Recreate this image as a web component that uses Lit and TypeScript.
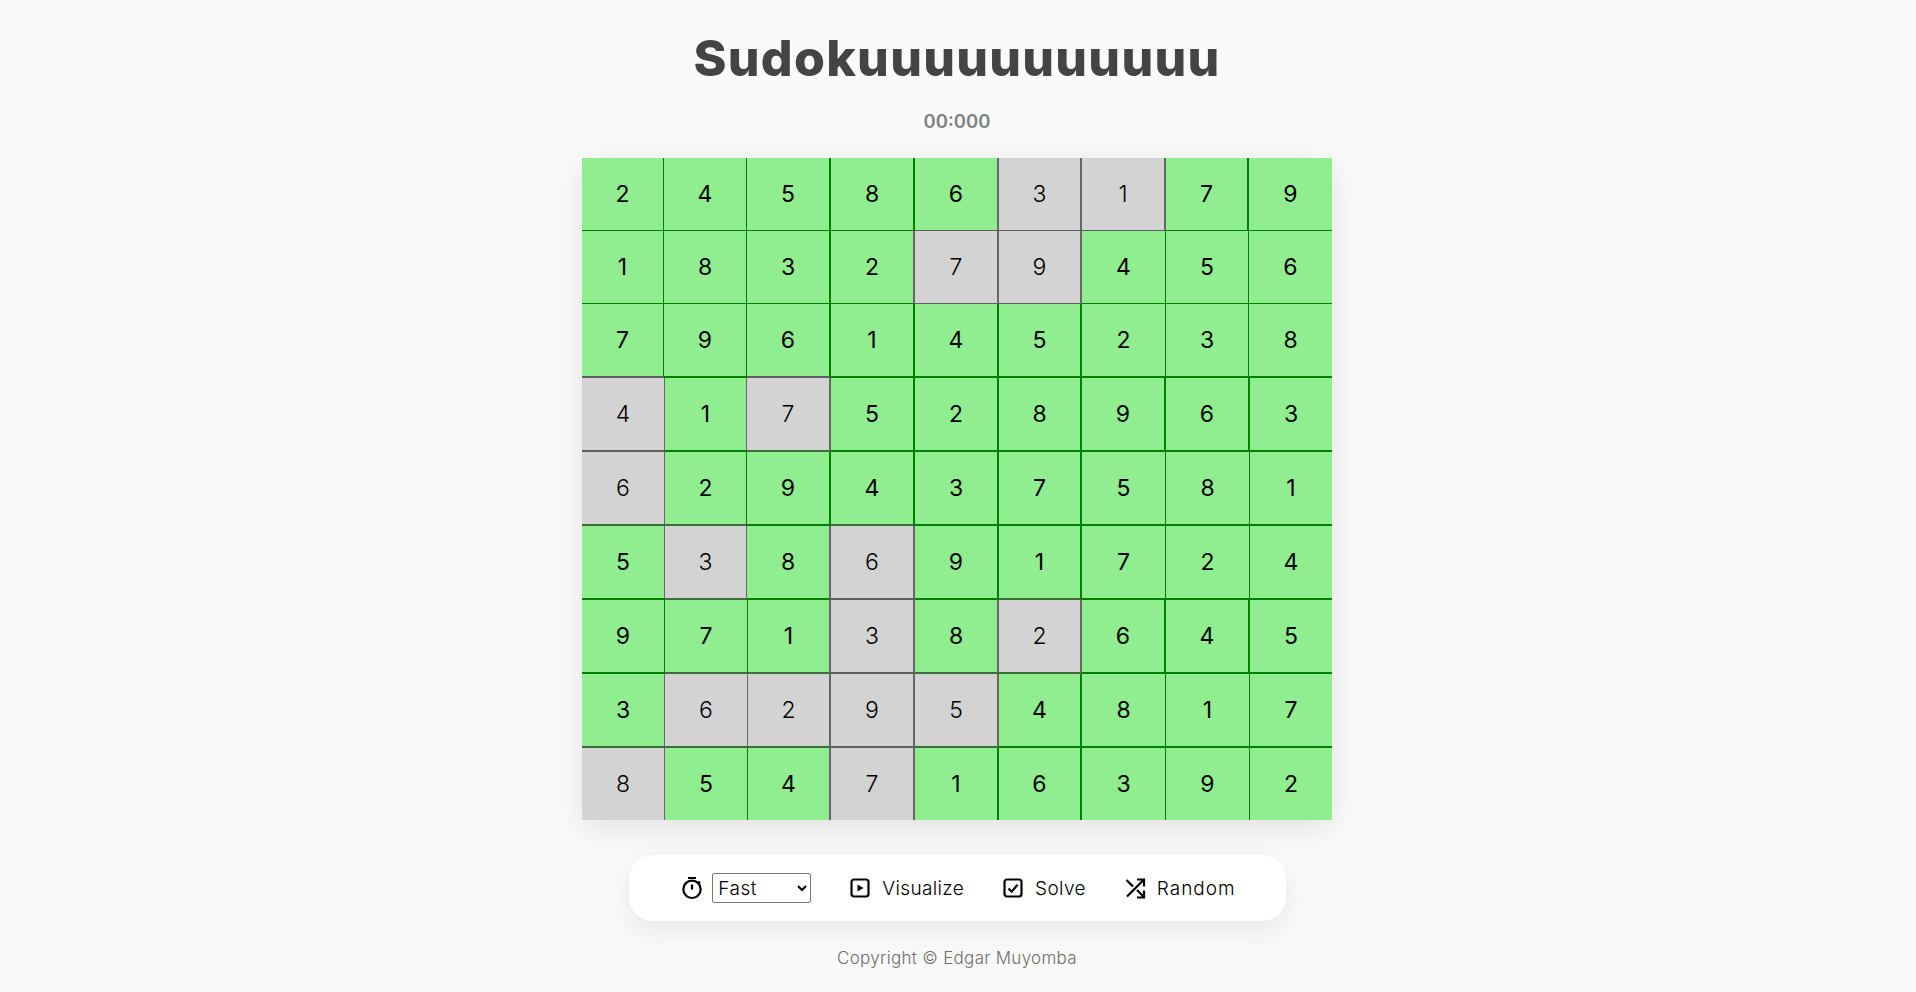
import { LitElement, html, css } from "lit";
import { customElement } from "lit/decorators.js";

type Cell = { v: number; g: boolean };

const RAW = [
  "2 4 5 8 6 3g 1g 7 9",
  "1 8 3 2 7g 9g 4 5 6",
  "7 9 6 1 4 5 2 3 8",
  "4g 1 7g 5 2 8 9 6 3",
  "6g 2 9 4 3 7 5 8 1",
  "5 3g 8 6g 9 1 7 2 4",
  "9 7 1 3g 8 2g 6 4 5",
  "3 6g 2g 9g 5g 4 8 1 7",
  "8g 5 4 7g 1 6 3 9 2",
];
const GRID: Cell[][] = RAW.map((r) =>
  r.split(" ").map((c) => ({ v: parseInt(c, 10), g: c.endsWith("g") }))
);

const LEFT = 582;
const RIGHT = 1332;
const ROW_H = [73, 73, 74, 74, 74, 74, 74, 74, 72];
const ROW_LINE = [1, 1, 2, 2, 2, 2, 2, 2, 0];

// start pixel and width of the vertical rules in each row
const V: [number, number][][] = [0, 1, 2, 3, 4, 5, 6, 7, 8].map((r) => {
  const thick7 = r === 0 || r === 3 || r === 6;
  const c8: [number, number] =
    r === 0 ? [1247, 2]
    : r === 1 || r === 2 ? [1248, 1]
    : r === 3 || r === 6 ? [1248, 2]
    : [1249, 1];
  return [
    [r < 3 ? 663 : 664, 1],
    [r < 6 ? 746 : 747, 1],
    [829, 2],
    [913, 2],
    [997, 2],
    [1080, 2],
    thick7 ? [1164, 2] : [1165, 1],
    c8,
  ] as [number, number][];
});

@customElement("app-root")
export class AppRoot extends LitElement {
  static styles = css`
    :host {
      display: flex;
      flex-direction: column;
      align-items: center;
      box-sizing: border-box;
      min-height: 992px;
      padding-right: 2px;
      background: #fafafa;
      font-family: Inter, "Noto Sans", sans-serif;
      color: #000;
    }
    h1 {
      margin: 26px 0 0;
      font-size: 50px;
      line-height: 64px;
      font-weight: 800;
      color: #444;
      letter-spacing: 1.27px;
    }
    .timer {
      margin-top: 19px;
      font-size: 18.5px;
      line-height: 24px;
      font-weight: 600;
      color: #808080;
    }
    .board {
      margin-top: 25px;
      width: 750px;
      display: flex;
      flex-direction: column;
      box-shadow: 0 8px 30px rgba(0, 0, 0, 0.1);
    }
    .row {
      display: grid;
    }
    .cell {
      display: flex;
      align-items: center;
      justify-content: center;
      box-sizing: border-box;
      background: #90ee90;
      font-size: 23px;
      font-weight: 400;
      border-style: solid;
      border-width: 0;
      border-right-width: var(--rw);
      border-bottom-width: var(--bw);
      border-right-color: var(--rc);
      border-bottom-color: var(--bc);
    }
    .cell.given {
      background: #d3d3d3;
      font-weight: 300;
    }
    .bar {
      margin-top: 35px;
      box-sizing: border-box;
      width: 657px;
      height: 66px;
      display: flex;
      align-items: center;
      justify-content: center;
      gap: 37px;
      padding-left: 2px;
      background: #fff;
      border-radius: 24px;
      box-shadow: 0 10px 30px rgba(0, 0, 0, 0.08);
    }
    .item {
      display: flex;
      align-items: center;
      gap: 10px;
      font-size: 19px;
      font-weight: 300;
      letter-spacing: 0.35px;
    }
    .item.speed {
      gap: 8px;
    }
    .random {
      letter-spacing: 1px;
    }
    svg {
      display: block;
      width: 24px;
      height: 24px;
      fill: none;
      stroke: #000;
      stroke-width: 2.2;
    }
    select {
      width: 99px;
      height: 30px;
      box-sizing: border-box;
      font: 300 19px Inter, "Noto Sans", sans-serif;
      letter-spacing: 0.5px;
      color: #000;
      background: #fff;
      border: 1px solid #767676;
      border-radius: 2px;
      padding: 0 0 0 1px;
    }
    footer {
      margin-top: 25px;
      font-size: 17px;
      line-height: 24px;
      font-weight: 300;
      letter-spacing: 0.3px;
      color: #6e6e6e;
    }
  `;

  private lineColor(r: number, c: number) {
    const a = GRID[r][c];
    const right = GRID[r][c + 1];
    const below = GRID[r + 1]?.[c];
    const rc = a.g || right?.g ? "#666" : "#008000";
    const anyGray = a.g || below?.g;
    const bc = !anyGray ? "#008000" : r < 3 || (a.g && below?.g) ? "#5e5e5e" : "#3d6f3d";
    return { rc, bc };
  }

  private renderRow(row: Cell[], r: number) {
    const lines = V[r];
    const ends = lines.map(([x, w]) => x + w);
    const widths = [ends[0] - LEFT];
    for (let i = 1; i < 8; i++) widths.push(ends[i] - ends[i - 1]);
    widths.push(RIGHT - ends[7]);
    const cols = widths.map((w) => `${w}px`).join(" ");
    return html`<div class="row" style="grid-template-columns:${cols};height:${ROW_H[r]}px">
      ${row.map((cell, c) => {
        const { rc, bc } = this.lineColor(r, c);
        const rw = c < 8 ? lines[c][1] : 0;
        return html`<div
          class="cell ${cell.g ? "given" : ""}"
          style="--rw:${rw}px;--bw:${ROW_LINE[r]}px;--rc:${rc};--bc:${bc}"
        >${cell.v}</div>`;
      })}
    </div>`;
  }

  render() {
    return html`
      <h1>Sudokuuuuuuuuuuu</h1>
      <div class="timer">00:000</div>
      <div class="board">${GRID.map((row, r) => this.renderRow(row, r))}</div>
      <div class="bar">
        <div class="item speed">
          <svg viewBox="0 0 24 24">
            <circle cx="12" cy="13.3" r="8.7"></circle>
            <path d="M8 2h8M12 8.5v5M18.3 5.5l1.7 1.7"></path>
          </svg>
          <select><option>Fast</option><option>Medium</option><option>Slow</option></select>
        </div>
        <div class="item">
          <svg viewBox="0 0 24 24">
            <rect x="3.5" y="3.5" width="17" height="17" rx="2.5"></rect>
            <path d="M9.5 8.5v7l6-3.5z" fill="#000" stroke="none"></path>
          </svg>
          <span>Visualize</span>
        </div>
        <div class="item">
          <svg viewBox="0 0 24 24">
            <rect x="3.5" y="3.5" width="17" height="17" rx="2.5"></rect>
            <path d="M7.5 12.5l3.2 3.2 5.8-7"></path>
          </svg>
          <span>Solve</span>
        </div>
        <div class="item">
          <svg viewBox="0 0 24 24">
            <path d="M4 20.5L20.5 4M14 3.5h7v7M3.5 4l6.5 6.5M14 14l6.5 6.5M21 14.5v7h-7"></path>
          </svg>
          <span class="random">Random</span>
        </div>
      </div>
      <footer>Copyright © Edgar Muyomba</footer>
    `;
  }
}
